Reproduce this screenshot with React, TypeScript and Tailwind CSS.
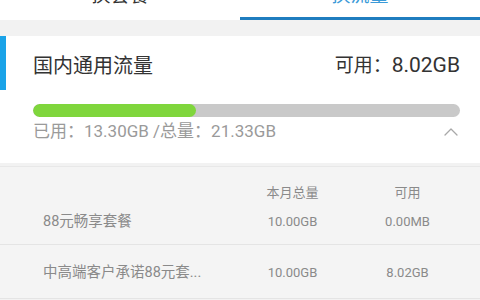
import { ChevronUp } from "lucide-react";

const rows = [
	{ name: "88元畅享套餐", total: "10.00GB", left: "0.00MB" },
	{ name: "中高端客户承诺88元套...", total: "10.00GB", left: "8.02GB" },
];

export default function App() {
	return (
		<div
			className="w-[480px] h-[300px] overflow-hidden bg-[#f2f2f2]"
			style={{ fontFamily: "Roboto, 'Noto Sans CJK SC', sans-serif" }}
		>
			{/* Tabs (scrolled, top cut off) */}
			<div className="flex h-[20px] bg-white">
				<div className="flex-1 relative overflow-hidden">
					<span className="absolute left-0 right-0 text-center -top-[18px] text-[19px] text-[#333]">
						换套餐
					</span>
				</div>
				<div className="flex-1 relative overflow-hidden">
					<span className="absolute left-0 right-0 text-center -top-[18px] text-[19px] text-[#3b9ad8]">
						换流量
					</span>
					<div className="absolute left-0 right-0 bottom-0 h-[3px] bg-[#1f7dbf]" />
				</div>
			</div>

			{/* Usage card */}
			<div className="mt-[16px] bg-white h-[127px] flex">
				<div className="w-[6px] h-[54px] bg-[#1aa3e8] shrink-0" />
				<div className="flex-1 pl-[27px] pr-[20px]">
					<div className="flex items-center justify-between h-[58px] pt-[2px]">
						<span className="text-[20px] text-[#333]">国内通用流量</span>
						<span className="text-[#333] flex items-baseline">
							<span className="text-[19px]">可用：</span>
							<span className="text-[21px]">8.02GB</span>
						</span>
					</div>
					<div className="h-[13px] rounded-full bg-[#c9c9c9] overflow-hidden mt-[10px]">
						<div className="h-full w-[163px] rounded-full bg-[#7fd63c]" />
					</div>
					<div className="flex items-center justify-between mt-[2px]">
						<span className="text-[17px] text-[#9a9a9a]">已用：13.30GB /总量：21.33GB</span>
						<ChevronUp className="w-[24px] h-[24px] text-[#a8a8a8] -mr-[3px]" strokeWidth={1.3} />
					</div>
				</div>
			</div>

			{/* Package table */}
			<div className="mt-[3px] bg-[#f4f4f4] border-t border-[#e8e8e8]">
				<div className="flex items-center h-[35px] pt-[16px] text-[13px] text-[#8a8a8a]">
					<span className="w-[235px]" />
					<span className="w-[115px] text-center">本月总量</span>
					<span className="w-[115px] text-center">可用</span>
				</div>
				{rows.map((r, i) => (
					<div
						key={r.name}
						className={`flex items-center text-[#8a8a8a] border-b border-[#e4e4e4] ${
							i === 0 ? "h-[43px] pb-[3px]" : "h-[54px] pt-[2px]"
						}`}
					>
						<span className="w-[235px] pl-[43px] text-[14.5px] whitespace-nowrap">{r.name}</span>
						<span className="w-[115px] text-center text-[13px]">{r.total}</span>
						<span className="w-[115px] text-center text-[13px]">{r.left}</span>
					</div>
				))}
			</div>
		</div>
	);
}
